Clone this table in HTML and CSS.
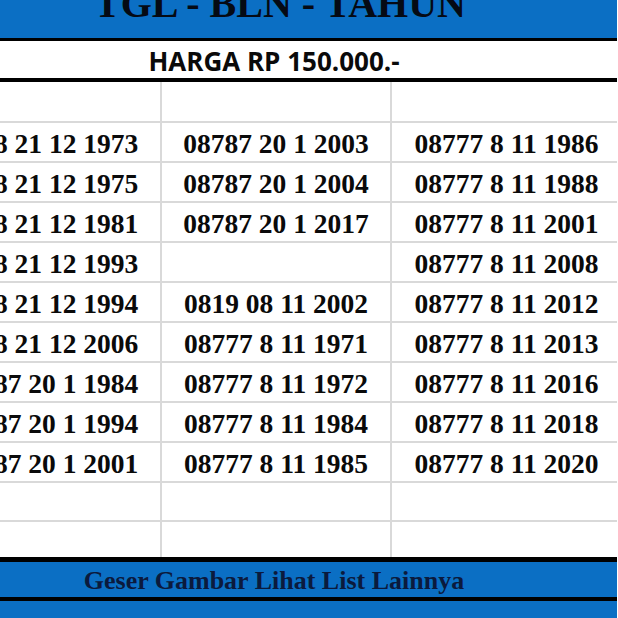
FILE: index.html
```html
<!DOCTYPE html>
<html>
<head>
<meta charset="utf-8">
<link rel="stylesheet" href="styles.css">
</head>
<body>
<div class="viewport">
  <div class="sheet">
    <div class="title-bar"><h1 class="title">TGL - BLN - TAHUN</h1></div>
    <div class="price-row">HARGA RP 150.000.-</div>
    <div class="grid">
      <div class="cell head"></div><div class="cell head"></div><div class="cell head"></div>

      <div class="cell">0878 21 12 1973</div><div class="cell">08787 20 1 2003</div><div class="cell">08777 8 11 1986</div>
      <div class="cell">0878 21 12 1975</div><div class="cell">08787 20 1 2004</div><div class="cell">08777 8 11 1988</div>
      <div class="cell">0878 21 12 1981</div><div class="cell">08787 20 1 2017</div><div class="cell">08777 8 11 2001</div>
      <div class="cell">0878 21 12 1993</div><div class="cell"></div><div class="cell">08777 8 11 2008</div>
      <div class="cell">0878 21 12 1994</div><div class="cell">0819 08 11 2002</div><div class="cell">08777 8 11 2012</div>
      <div class="cell">0878 21 12 2006</div><div class="cell">08777 8 11 1971</div><div class="cell">08777 8 11 2013</div>
      <div class="cell">08787 20 1 1984</div><div class="cell">08777 8 11 1972</div><div class="cell">08777 8 11 2016</div>
      <div class="cell">08787 20 1 1994</div><div class="cell">08777 8 11 1984</div><div class="cell">08777 8 11 2018</div>
      <div class="cell">08787 20 1 2001</div><div class="cell">08777 8 11 1985</div><div class="cell">08777 8 11 2020</div>

      <div class="cell"></div><div class="cell"></div><div class="cell"></div>
      <div class="cell"></div><div class="cell"></div><div class="cell"></div>
    </div>
    <div class="footer-bar">Geser Gambar Lihat List Lainnya</div>
    <div class="footer-tail"></div>
  </div>
</div>
</body>
</html>
```
FILE: styles.css
```css
html, body {
  margin: 0;
  padding: 0;
  background: #ffffff;
}

.viewport {
  width: 618px;
  height: 618px;
  overflow: hidden;
}

.sheet {
  margin-left: -69px;
  width: 686px;
  display: flex;
  flex-direction: column;
}

.title-bar {
  height: 38px;
  background: #0b6fc4;
  overflow: hidden;
  border-bottom: 3px solid #000;
  text-align: center;
}

.title {
  margin: -16px 0 0 12px;
  font-family: "Liberation Serif", serif;
  font-weight: bold;
  font-size: 40px;
  line-height: 40px;
  color: #050a14;
}

.price-row {
  height: 37px;
  box-sizing: border-box;
  padding-top: 3px;
  background: #fff;
  border-bottom: 4px solid #000;
  font-family: "Open Sans", sans-serif;
  font-weight: bold;
  font-size: 26px;
  line-height: 34px;
  text-align: center;
  color: #0a0a0a;
  height: 41px;
}

.grid {
  display: grid;
  grid-template-columns: 229px 228px 229px;
  grid-template-rows: 39px repeat(9, 38px) 37px 35px;
  column-gap: 2px;
  row-gap: 2px;
  background: #d9d9d9;
}

.cell {
  background: #fff;
  font-family: "Liberation Serif", serif;
  font-weight: bold;
  font-size: 27.5px;
  color: #0a0a0a;
  display: flex;
  align-items: center;
  justify-content: center;
  padding-top: 3px;
  box-sizing: border-box;
  white-space: nowrap;
}

.footer-bar {
  height: 44px;
  box-sizing: border-box;
  padding-top: 2px;
  background: #0b6fc4;
  border-top: 5px solid #000;
  border-bottom: 4px solid #000;
  font-family: "Liberation Serif", serif;
  font-weight: bold;
  font-size: 26px;
  line-height: 33px;
  text-align: center;
  color: #0b1a3d;
}

.footer-tail {
  height: 20px;
  background: #0b6fc4;
}
```
